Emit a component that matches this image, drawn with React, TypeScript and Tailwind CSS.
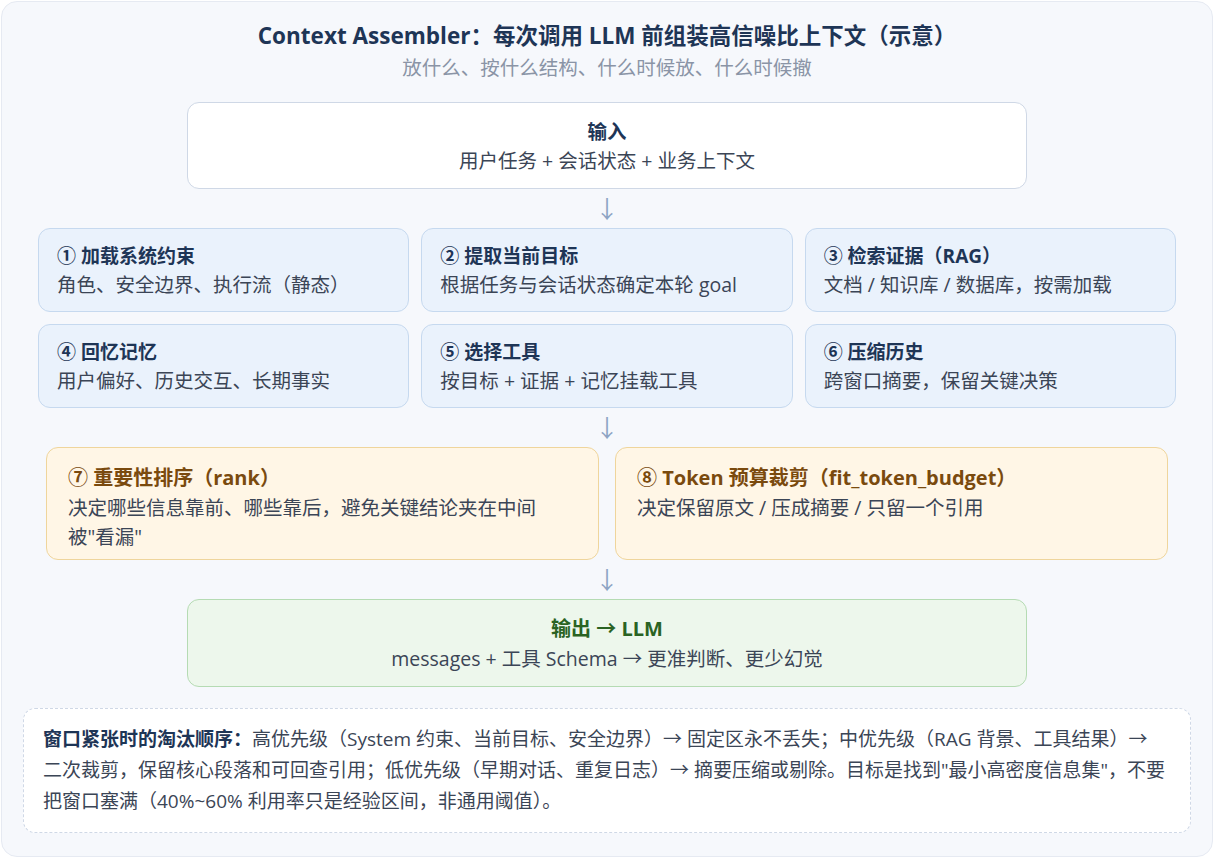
import React from 'react';

const steps = [
  { title: '① 加载系统约束', desc: '角色、安全边界、执行流（静态）' },
  { title: '② 提取当前目标', desc: '根据任务与会话状态确定本轮 goal' },
  { title: '③ 检索证据（RAG）', desc: '文档 / 知识库 / 数据库，按需加载' },
  { title: '④ 回忆记忆', desc: '用户偏好、历史交互、长期事实' },
  { title: '⑤ 选择工具', desc: '按目标 + 证据 + 记忆挂载工具' },
  { title: '⑥ 压缩历史', desc: '跨窗口摘要，保留关键决策' },
];

const Arrow = () => (
  <div className="flex h-[39px] items-center justify-center text-[24px] leading-none text-[#8da4c4]">↓</div>
);

export default function App() {
  return (
    <div
      className="min-h-[859px] bg-white p-px"
      style={{ fontFamily: '"Open Sans", "Noto Sans CJK SC", sans-serif' }}
    >
      <div className="h-[856px] w-[1212px] rounded-2xl border border-[#e6eaf2] bg-[#f6f8fc] px-[21px] pt-[17px]">
        <div className="text-center text-[22.5px] font-bold leading-[34px] text-[#1e3556]">
          Context Assembler：每次调用 LLM 前组装高信噪比上下文（示意）
        </div>
        <div className="mt-[1px] text-center text-[19.5px] leading-[28px] text-[#8a94a6]">
          放什么、按什么结构、什么时候放、什么时候撤
        </div>

        <div className="mx-auto mt-[20px] flex h-[87px] w-[840px] flex-col items-center justify-center rounded-xl border border-[#cfd8e6] bg-white">
          <div className="text-[19.5px] font-bold leading-[29px] text-[#1e3556]">输入</div>
          <div className="text-[19.5px] leading-[29px] text-[#3b4556]">用户任务 + 会话状态 + 业务上下文</div>
        </div>

        <Arrow />

        <div className="mx-[15px] grid grid-cols-3 gap-x-3 gap-y-3">
          {steps.map((s) => (
            <div
              key={s.title}
              className="flex h-[84px] flex-col justify-center rounded-xl border border-[#c6d9ef] bg-[#eaf2fc] px-[18px]"
            >
              <div className="text-[19px] font-bold leading-[28px] text-[#1e3556]">{s.title}</div>
              <div className="text-[19.5px] leading-[29px] text-[#3b4556]">{s.desc}</div>
            </div>
          ))}
        </div>

        <Arrow />

        <div className="mx-[23px] grid grid-cols-2 gap-4">
          <div className="h-[113px] rounded-xl border border-[#efd59c] bg-[#fff6e6] px-[21px] pt-[15px]">
            <div className="text-[20px] font-bold leading-[30px] text-[#7a4a0e]">⑦ 重要性排序（rank）</div>
            <div className="pr-[40px] text-[19.5px] leading-[29px] text-[#3b4556]">
              决定哪些信息靠前、哪些靠后，避免关键结论夹在中间被"看漏"
            </div>
          </div>
          <div className="h-[113px] rounded-xl border border-[#efd59c] bg-[#fff6e6] px-[21px] pt-[15px]">
            <div className="text-[20px] font-bold leading-[30px] text-[#7a4a0e]">⑧ Token 预算裁剪（fit_token_budget）</div>
            <div className="text-[19.5px] leading-[29px] text-[#3b4556]">决定保留原文 / 压成摘要 / 只留一个引用</div>
          </div>
        </div>

        <Arrow />

        <div className="mx-auto flex h-[88px] w-[840px] flex-col items-center justify-center rounded-xl border border-[#b5dbb3] bg-[#edf7ec]">
          <div className="text-[20px] font-bold leading-[30px] text-[#2a6323]">输出 → LLM</div>
          <div className="text-[19.5px] leading-[29px] text-[#3b4556]">messages + 工具 Schema → 更准判断、更少幻觉</div>
        </div>

        <div className="mt-[21px] rounded-xl border border-dashed border-[#cfd8e6] bg-white px-[19px] py-[15px] text-[19px] leading-[31px] text-[#3b4556]">
          <span className="font-bold text-[#1e3556]">窗口紧张时的淘汰顺序：</span>
          高优先级（System 约束、当前目标、安全边界）→ 固定区永不丢失；中优先级（RAG 背景、工具结果）→ 二次裁剪，保留核心段落和可回查引用；低优先级（早期对话、重复日志）→ 摘要压缩或剔除。目标是找到"最小高密度信息集"，不要把窗口塞满（40%~60% 利用率只是经验区间，非通用阈值）。
        </div>
      </div>
    </div>
  );
}
